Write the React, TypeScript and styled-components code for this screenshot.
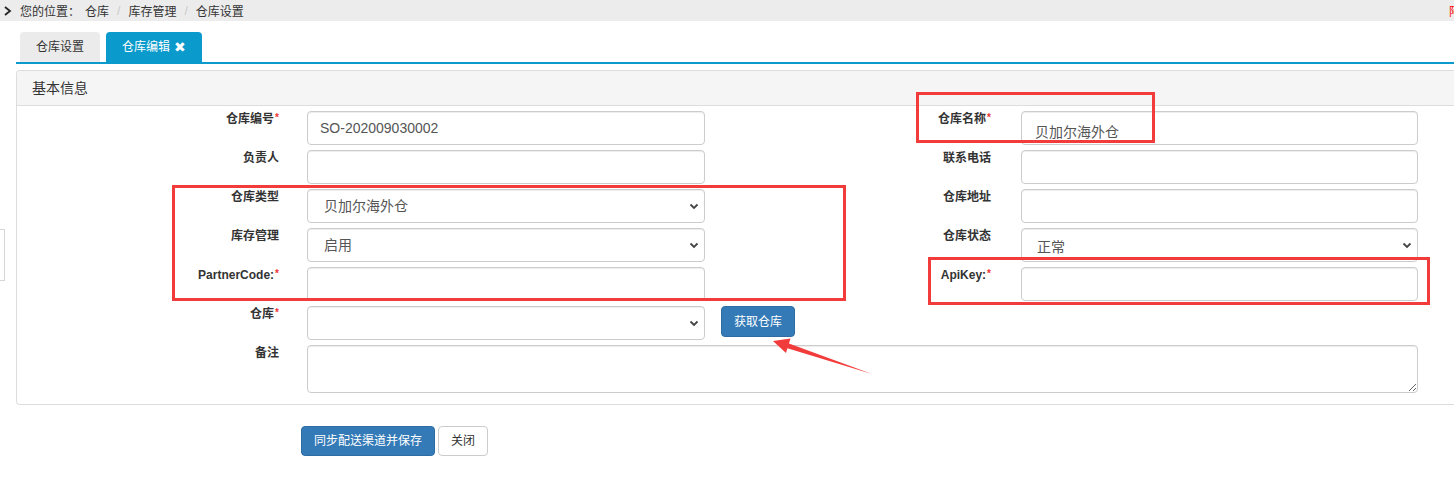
import React from "react";
import styled, { createGlobalStyle } from "styled-components";

const GlobalStyle = createGlobalStyle`
  html, body { margin: 0; padding: 0; background: #fff; }
  body {
    font-family: "Liberation Sans", "Noto Sans CJK SC", sans-serif;
    font-size: 12px;
    color: #333;
    overflow: hidden;
    width: 1454px;
    height: 487px;
  }
  * { box-sizing: border-box; }
`;

const Page = styled.div`
  position: relative;
  width: 1454px;
  height: 487px;
  overflow: hidden;
`;

const Breadcrumb = styled.div`
  height: 21px;
  background: #ececec;
  display: flex;
  align-items: center;
  padding-left: 3px;
  white-space: nowrap;
`;

const Crumbs = styled.div`
  flex: 1;
  display: flex;
  align-items: center;
  gap: 0;
`;

const Crumb = styled.span`
  color: #333;
`;

const Sep = styled.span`
  color: #c8c8c8;
  padding: 0 8px;
`;

const RedMark = styled.span`
  color: #ff0000;
  margin-right: -7px;
  font-size: 12px;
`;

const Main = styled.div`
  padding: 11px 0 0 16px;
`;

const TabBar = styled.div`
  display: flex;
  gap: 6px;
  padding-left: 4px;
  border-bottom: 2px solid #0a9acb;
  margin-right: -20px;
`;

const Tab = styled.div<{ $active?: boolean }>`
  height: 30px;
  line-height: 30px;
  padding: 0 16px;
  border-radius: 4px 4px 0 0;
  background: ${(p) => (p.$active ? "#0a9acb" : "#ebebeb")};
  color: ${(p) => (p.$active ? "#fff" : "#333")};
  font-size: 12px;
  display: flex;
  align-items: center;
  gap: 4px;
`;

const CloseX = styled.span`
  font-family: "DejaVu Sans", sans-serif;
  font-size: 14px;
  font-weight: bold;
`;

const Panel = styled.div`
  margin-top: 6px;
  border: 1px solid #ddd;
  border-right: none;
  border-radius: 4px 0 0 4px;
  margin-right: -20px;
`;

const PanelHeading = styled.div`
  height: 35px;
  line-height: 34px;
  background: #f5f5f5;
  border-bottom: 1px solid #ddd;
  padding-left: 15px;
  font-size: 14px;
  color: #333;
  border-radius: 4px 0 0 0;
`;

const FormGrid = styled.div`
  display: grid;
  grid-template-columns: 290px 398px 316px 397px;
  row-gap: 5px;
  padding: 5px 0 11px;
`;

const Label = styled.label<{ $pr: number }>`
  display: block;
  text-align: right;
  padding-right: ${(p) => p.$pr}px;
  padding-top: 0;
  font-weight: bold;
  font-size: 12px;
  line-height: 17px;
  color: #333;
`;

const Req = styled.sup`
  color: #e33;
  font-size: 10px;
  vertical-align: top;
  position: relative;
  top: -2px;
  margin-left: 1px;
`;

const TextInput = styled.input<{ $pt?: number }>`
  display: block;
  width: 100%;
  height: 34px;
  border: 1px solid #ccc;
  border-radius: 4px;
  padding: ${(p) => p.$pt ?? 0}px 12px 0 ${(p) => (p.$pt ? 13 : 12)}px;
  font-family: "Liberation Sans", "Noto Sans CJK SC", sans-serif;
  font-size: 14px;
  color: #555;
  box-shadow: inset 0 1px 1px rgba(0, 0, 0, 0.075);
  outline: none;
  background: #fff;
`;

const SelectWrap = styled.div`
  position: relative;
  width: 100%;
`;

const Select = styled.select<{ $pt?: number }>`
  display: block;
  width: 100%;
  height: 34px;
  appearance: none;
  -webkit-appearance: none;
  border: 1px solid #ccc;
  border-radius: 4px;
  padding: ${(p) => p.$pt ?? 0}px 24px 0 ${(p) => (p.$pt ? 15 : 16)}px;
  font-family: "Liberation Sans", "Noto Sans CJK SC", sans-serif;
  font-size: 14px;
  color: #555;
  background: #fff;
  box-shadow: inset 0 1px 1px rgba(0, 0, 0, 0.075);
  outline: none;
`;

const Chevron = styled.svg`
  position: absolute;
  right: 6px;
  top: 50%;
  margin-top: -3px;
  width: 10px;
  height: 7px;
  pointer-events: none;
`;

const TextArea = styled.textarea`
  grid-column: 2 / 5;
  display: block;
  width: 100%;
  height: 48px;
  border: 1px solid #ccc;
  border-radius: 4px;
  box-shadow: inset 0 1px 1px rgba(0, 0, 0, 0.075);
  outline: none;
  resize: both;
`;

const Btn = styled.button<{ $primary?: boolean; $h?: number }>`
  height: ${(p) => p.$h ?? 30}px;
  padding: 0 12px;
  border-radius: 4px;
  border: 1px solid ${(p) => (p.$primary ? "#2e6da4" : "#ccc")};
  background: ${(p) => (p.$primary ? "#337ab7" : "#fff")};
  color: ${(p) => (p.$primary ? "#fff" : "#333")};
  font-family: "Liberation Sans", "Noto Sans CJK SC", sans-serif;
  font-size: 12px;
  line-height: 1;
  cursor: pointer;
`;

const BtnCell = styled.div`
  padding-left: 16px;
`;

const Actions = styled.div`
  display: flex;
  gap: 3px;
  padding-left: 285px;
  margin-top: 21px;
`;

const SideToggle = styled.div`
  position: absolute;
  left: -10px;
  top: 229px;
  width: 15px;
  height: 52px;
  border: 1px solid #d6d6d6;
  background: #fff;
`;

const Annotations = styled.svg`
  position: absolute;
  left: 0;
  top: 0;
  width: 1454px;
  height: 487px;
  pointer-events: none;
`;

const ChevronDown = () => (
  <Chevron viewBox="0 0 10 7">
    <polyline points="1.5,1.5 5,5 8.5,1.5" fill="none" stroke="#444" strokeWidth="1.8" />
  </Chevron>
);

type Field = {
  label: string;
  req?: boolean;
  kind: "input" | "select";
  value?: string;
  pt?: number;
};

const leftFields: Field[] = [
  { label: "仓库编号", req: true, kind: "input", value: "SO-202009030002" },
  { label: "负责人", kind: "input" },
  { label: "仓库类型", kind: "select", value: "贝加尔海外仓" },
  { label: "库存管理", kind: "select", value: "启用" },
  { label: "PartnerCode:", req: true, kind: "input" },
];

const rightFields: Field[] = [
  { label: "仓库名称", req: true, kind: "input", value: "贝加尔海外仓", pt: 5 },
  { label: "联系电话", kind: "input" },
  { label: "仓库地址", kind: "input" },
  { label: "仓库状态", kind: "select", value: "正常", pt: 4 },
  { label: "ApiKey:", req: true, kind: "input" },
];

const Control = ({ f }: { f: Field }) =>
  f.kind === "select" ? (
    <SelectWrap>
      <Select $pt={f.pt} defaultValue={f.value}>
        <option>{f.value}</option>
      </Select>
      <ChevronDown />
    </SelectWrap>
  ) : (
    <TextInput $pt={f.pt} defaultValue={f.value ?? ""} />
  );

const FieldLabel = ({ f, pr }: { f: Field; pr: number }) => (
  <Label $pr={pr}>
    {f.label}
    {f.req && <Req>*</Req>}
  </Label>
);

export default function App() {
  return (
    <Page>
      <GlobalStyle />
      <Breadcrumb>
        <Crumbs>
          <svg width="10" height="12" viewBox="0 0 10 12" style={{ marginRight: 7 }}>
            <polyline points="2,2 7,6 2,10" fill="none" stroke="#222" strokeWidth="1.8" />
          </svg>
          <Crumb>您的位置：</Crumb>
          <Crumb style={{ marginLeft: 5 }}>仓库</Crumb>
          <Sep>/</Sep>
          <Crumb>库存管理</Crumb>
          <Sep>/</Sep>
          <Crumb>仓库设置</Crumb>
        </Crumbs>
        <RedMark>阿</RedMark>
      </Breadcrumb>
      <Main>
        <TabBar>
          <Tab>仓库设置</Tab>
          <Tab $active>
            仓库编辑<CloseX>✖</CloseX>
          </Tab>
        </TabBar>
        <Panel>
          <PanelHeading>基本信息</PanelHeading>
          <FormGrid>
            {leftFields.map((lf, i) => (
              <React.Fragment key={lf.label}>
                <FieldLabel f={lf} pr={28} />
                <Control f={lf} />
                <FieldLabel f={rightFields[i]} pr={30} />
                <Control f={rightFields[i]} />
              </React.Fragment>
            ))}
            <FieldLabel f={{ label: "仓库", req: true, kind: "select" }} pr={28} />
            <SelectWrap>
              <Select defaultValue="">
                <option value=""></option>
              </Select>
              <ChevronDown />
            </SelectWrap>
            <BtnCell>
              <Btn $primary $h={31}>获取仓库</Btn>
            </BtnCell>
            <div />
            <FieldLabel f={{ label: "备注", kind: "input" }} pr={28} />
            <TextArea />
          </FormGrid>
        </Panel>
        <Actions>
          <Btn $primary>同步配送渠道并保存</Btn>
          <Btn>关闭</Btn>
        </Actions>
      </Main>
      <SideToggle />
      <Annotations viewBox="0 0 1454 487">
        <g fill="none" stroke="#f23c3c" strokeWidth="3">
          <rect x="917.5" y="93.5" width="236" height="48" />
          <rect x="173.5" y="186.5" width="671" height="113" />
          <rect x="929.5" y="258.5" width="499" height="45" />
        </g>
        <polygon
          fill="#f23c3c"
          points="773,341 790.5,338.5 789,343.5 872,374 787.4,348.3 786,353"
        />
      </Annotations>
    </Page>
  );
}
